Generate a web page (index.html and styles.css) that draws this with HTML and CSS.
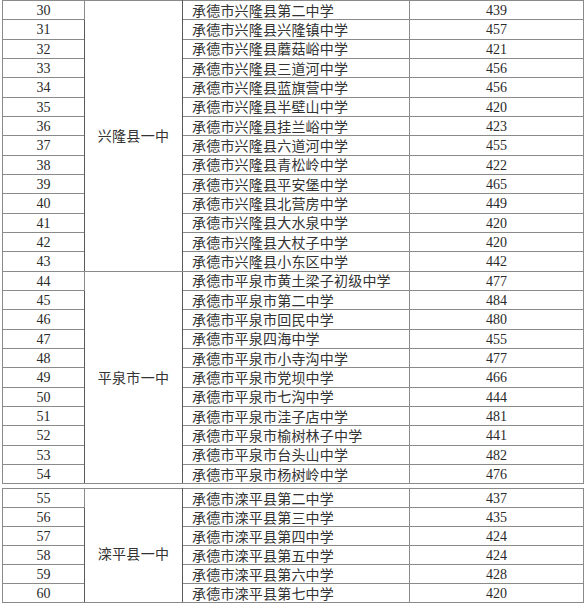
FILE: index.html
```html
<!DOCTYPE html>
<html lang="zh-CN">
<head>
<meta charset="utf-8">
<link rel="stylesheet" href="styles.css">
</head>
<body>
<table class="sheet first">
<colgroup><col class="c1"><col class="c2"><col class="c3"><col class="c4"></colgroup>
<tr><td class="num">30</td><td class="grp" rowspan="14">兴隆县一中</td><td class="name">承德市兴隆县第二中学</td><td class="num">439</td></tr>
<tr><td class="num">31</td><td class="name">承德市兴隆县兴隆镇中学</td><td class="num">457</td></tr>
<tr><td class="num">32</td><td class="name">承德市兴隆县蘑菇峪中学</td><td class="num">421</td></tr>
<tr><td class="num">33</td><td class="name">承德市兴隆县三道河中学</td><td class="num">456</td></tr>
<tr><td class="num">34</td><td class="name">承德市兴隆县蓝旗营中学</td><td class="num">456</td></tr>
<tr><td class="num">35</td><td class="name">承德市兴隆县半壁山中学</td><td class="num">420</td></tr>
<tr><td class="num">36</td><td class="name">承德市兴隆县挂兰峪中学</td><td class="num">423</td></tr>
<tr><td class="num">37</td><td class="name">承德市兴隆县六道河中学</td><td class="num">455</td></tr>
<tr><td class="num">38</td><td class="name">承德市兴隆县青松岭中学</td><td class="num">422</td></tr>
<tr><td class="num">39</td><td class="name">承德市兴隆县平安堡中学</td><td class="num">465</td></tr>
<tr><td class="num">40</td><td class="name">承德市兴隆县北营房中学</td><td class="num">449</td></tr>
<tr><td class="num">41</td><td class="name">承德市兴隆县大水泉中学</td><td class="num">420</td></tr>
<tr><td class="num">42</td><td class="name">承德市兴隆县大杖子中学</td><td class="num">420</td></tr>
<tr><td class="num">43</td><td class="name">承德市兴隆县小东区中学</td><td class="num">442</td></tr>
<tr><td class="num">44</td><td class="grp" rowspan="11">平泉市一中</td><td class="name">承德市平泉市黄土梁子初级中学</td><td class="num">477</td></tr>
<tr><td class="num">45</td><td class="name">承德市平泉市第二中学</td><td class="num">484</td></tr>
<tr><td class="num">46</td><td class="name">承德市平泉市回民中学</td><td class="num">480</td></tr>
<tr><td class="num">47</td><td class="name">承德市平泉四海中学</td><td class="num">455</td></tr>
<tr><td class="num">48</td><td class="name">承德市平泉市小寺沟中学</td><td class="num">477</td></tr>
<tr><td class="num">49</td><td class="name">承德市平泉市党坝中学</td><td class="num">466</td></tr>
<tr><td class="num">50</td><td class="name">承德市平泉市七沟中学</td><td class="num">444</td></tr>
<tr><td class="num">51</td><td class="name">承德市平泉市洼子店中学</td><td class="num">481</td></tr>
<tr><td class="num">52</td><td class="name">承德市平泉市榆树林子中学</td><td class="num">441</td></tr>
<tr><td class="num">53</td><td class="name">承德市平泉市台头山中学</td><td class="num">482</td></tr>
<tr><td class="num">54</td><td class="name">承德市平泉市杨树岭中学</td><td class="num">476</td></tr>
</table>
<table class="sheet second">
<colgroup><col class="c1"><col class="c2"><col class="c3"><col class="c4"></colgroup>
<tr><td class="num">55</td><td class="grp low" rowspan="6">滦平县一中</td><td class="name">承德市滦平县第二中学</td><td class="num">437</td></tr>
<tr><td class="num">56</td><td class="name">承德市滦平县第三中学</td><td class="num">435</td></tr>
<tr><td class="num">57</td><td class="name">承德市滦平县第四中学</td><td class="num">424</td></tr>
<tr><td class="num">58</td><td class="name">承德市滦平县第五中学</td><td class="num">424</td></tr>
<tr><td class="num">59</td><td class="name">承德市滦平县第六中学</td><td class="num">428</td></tr>
<tr><td class="num">60</td><td class="name">承德市滦平县第七中学</td><td class="num">420</td></tr>
</table>
</body>
</html>
```
FILE: styles.css
```css
html, body {
  margin: 0;
  padding: 0;
  background: #ffffff;
}
body {
  font-family: "Liberation Serif", "Noto Sans CJK SC", serif;
  font-size: 14px;
  color: #2a2a2a;
  overflow: hidden;
}
.sheet {
  border-collapse: collapse;
  table-layout: fixed;
  width: 581px;
  margin-left: 2px;
}
.first {
  margin-top: 0;
}
.second {
  margin-top: 4px;
}
.c1 { width: 82px; }
.c2 { width: 98px; }
.c3 { width: 227px; }
.c4 { width: 174px; }
.sheet td {
  border: 1px solid #8a8a8a;
  padding: 0;
  line-height: 17px;
  white-space: nowrap;
  overflow: hidden;
}
.first tr { height: 19.33px; }
.second tr { height: 19px; }
.sheet td.num {
  text-align: center;
  padding-top: 1px;
}
.sheet td.name {
  padding-left: 9px;
  font-family: "Noto Sans CJK SC", sans-serif;
  letter-spacing: 0.2px;
  color: #333333;
}
.sheet td.grp {
  text-align: center;
  vertical-align: middle;
  font-family: "Noto Sans CJK SC", sans-serif;
  letter-spacing: 0.3px;
  color: #333333;
  border-left-color: #5a5a5a;
  border-right-color: #5a5a5a;
}
.sheet td.low {
  padding-top: 16px;
}
```
